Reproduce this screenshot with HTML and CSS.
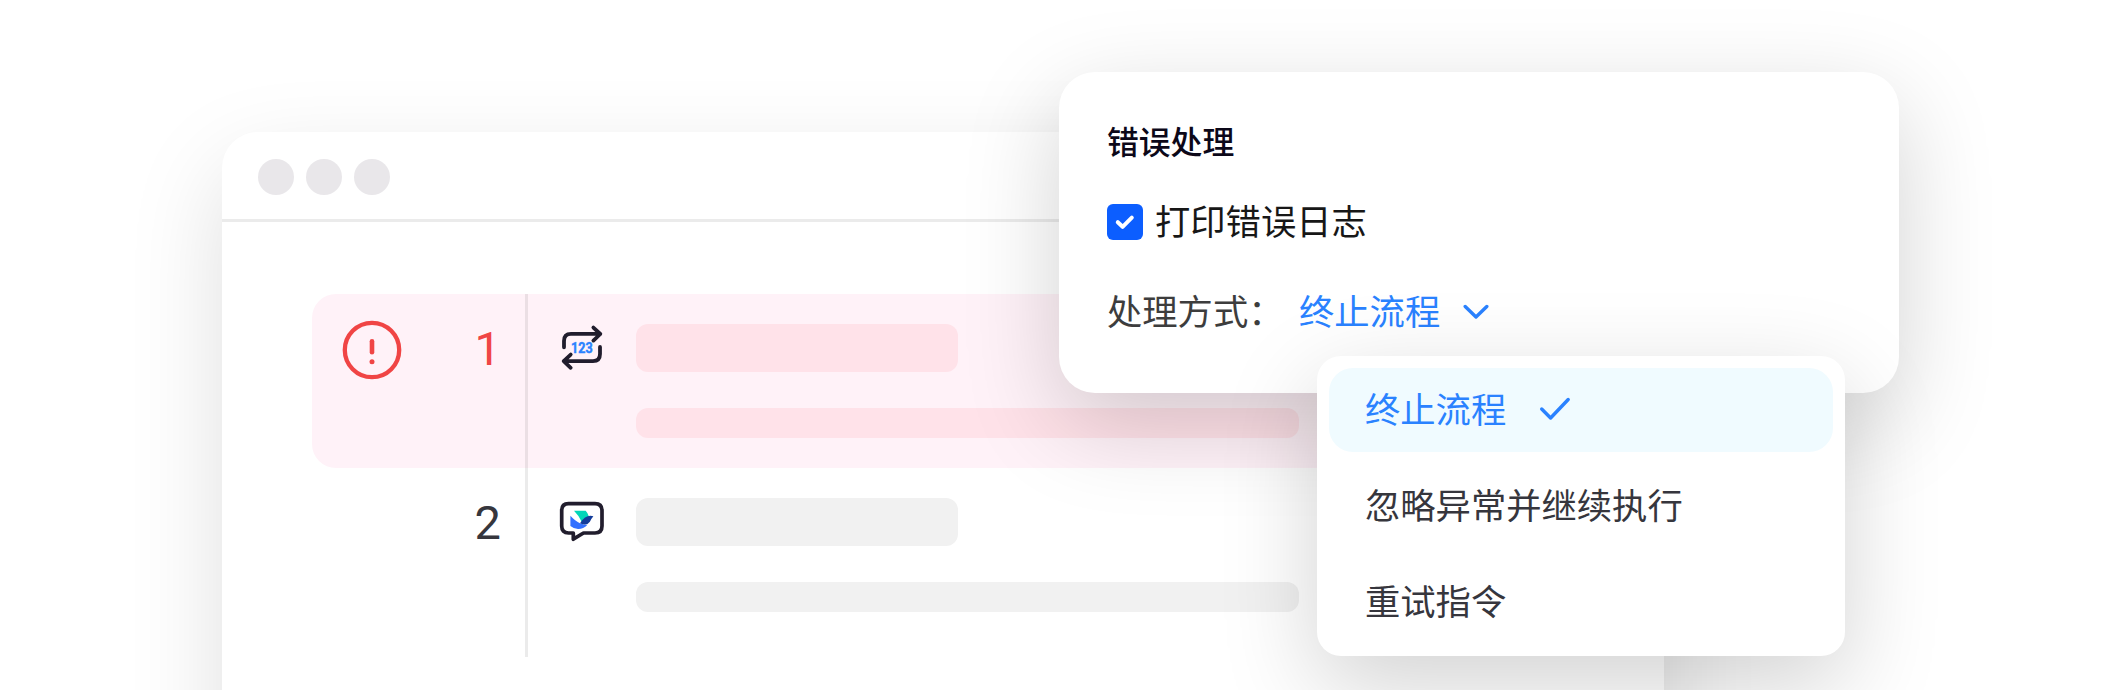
FILE: index.html
```html
<!DOCTYPE html>
<html lang="zh-CN">
<head>
<meta charset="utf-8">
<title>错误处理</title>
<link rel="stylesheet" href="styles.css">
</head>
<body>
<main class="stage">
  <section class="window">
    <header class="window-bar">
      <span class="dot"></span><span class="dot"></span><span class="dot"></span>
    </header>
    <div class="steps">
      <article class="step step-error">
        <div class="gutter">
          <svg class="alert" viewBox="0 0 60 60" fill="none" stroke="#f04545" stroke-width="4.3" stroke-linecap="round">
            <circle cx="30" cy="30" r="27.2"/>
            <path d="M30 21.2V32.3" stroke-width="4.6"/>
            <circle cx="30" cy="41.8" r="2.5" fill="#f04545" stroke="none"/>
          </svg>
          <span class="number">1</span>
        </div>
        <svg class="icon" viewBox="0 0 48 48" fill="none" stroke="#211d2d" stroke-width="3.8" stroke-linecap="round" stroke-linejoin="round">
          <path d="M6 23.3V17Q6 9.9 13 9.9H42.3M35.4 3.6L42.3 10L35.4 16.6"/>
          <path d="M42 23V30Q42 37.1 35 37.1H5.7M12.7 30.6L5.7 37.1L12.7 43.8"/>
          <text class="icon-digits" x="13" y="29.2" textLength="21.6" lengthAdjust="spacingAndGlyphs">123</text>
        </svg>
        <div class="lines"><span class="line line-short"></span><span class="line line-long"></span></div>
      </article>
      <article class="step">
        <div class="gutter"><span class="number">2</span></div>
        <svg class="icon" viewBox="0 0 48 48" fill="none">
          <path d="M10.5 5.6H37Q44 5.6 44 12.6V28Q44 35 37 35H25.5L15.3 41.2V35H10.5Q3.7 35 3.7 28V12.6Q3.7 5.6 10.5 5.6Z" stroke="#211d2d" stroke-width="3.7" stroke-linejoin="round"/>
          <path d="M16 12.7H27.7Q30 15 31 18.8Q27.5 20 23.8 24Q20.5 17 16 12.7Z" fill="#00d6b9"/>
          <path d="M12.4 17.8Q17.5 23.5 22 25.2Q26 27 29.5 26.8Q25 31.3 20 31.1Q15.8 30.8 12.4 28Z" fill="#3370ff"/>
          <path d="M22 25.2Q28 16 35.4 18.3Q33 21 31.9 23.8Q28.5 28.6 22 25.2Z" fill="#133c9a"/>
        </svg>
        <div class="lines"><span class="line line-short"></span><span class="line line-long"></span></div>
      </article>
    </div>
  </section>

  <section class="panel">
    <h1 class="panel-title">错误处理</h1>
    <label class="check-row">
      <span class="checkbox">
        <svg viewBox="0 0 36 36" fill="none" stroke="#fff" stroke-width="4" stroke-linecap="round" stroke-linejoin="round"><path d="M10.8 18.2L15.6 22.8L24.8 13.6"/></svg>
      </span>
      <span class="label">打印错误日志</span>
    </label>
    <div class="mode-row">
      <span class="label mode-label">处理方式：</span>
      <span class="label mode-value">终止流程</span>
      <svg class="chevron" viewBox="0 0 26 16" fill="none" stroke="#2a82ff" stroke-width="3.4" stroke-linecap="round" stroke-linejoin="round"><path d="M2.2 2.5L13 13L23.8 2.5"/></svg>
    </div>
  </section>

  <ul class="menu">
    <li class="option selected">
      <span class="label">终止流程</span>
      <svg class="tick" viewBox="0 0 32 24" fill="none" stroke="#2a82ff" stroke-width="3.4" stroke-linecap="round" stroke-linejoin="round"><path d="M2.7 12L11.6 21L29.2 2.5"/></svg>
    </li>
    <li class="option"><span class="label">忽略异常并继续执行</span></li>
    <li class="option"><span class="label">重试指令</span></li>
  </ul>
</main>
</body>
</html>
```

FILE: styles.css
```css
* { box-sizing: border-box; }

body {
  margin: 0;
  background: #fff;
  font-family: "Noto Sans CJK SC", sans-serif;
}

.stage {
  position: relative;
  width: 2124px;
  height: 690px;
  padding: 132px 0 0 222px;
  overflow: hidden;
}

.window {
  width: 1442px;
  height: 900px;
  border-radius: 36px;
  background: #fff;
  box-shadow: 0 36px 96px rgba(0, 0, 0, .13);
}

.window-bar {
  display: flex;
  gap: 12px;
  height: 90px;
  padding: 27px 36px;
  border-bottom: 3px solid #ebebeb;
}

.dot {
  width: 36px;
  height: 36px;
  border-radius: 50%;
  background: #e9e7ea;
}

.steps { padding: 72px 90px 0; }

.step {
  display: flex;
  height: 174px;
  border-radius: 24px;
}

.step + .step { height: 189px; }

.step-error { background: #fff2f8; }

.gutter {
  display: flex;
  justify-content: flex-end;
  width: 216px;
  padding: 26px 24px 0 30px;
  border-right: 3px solid rgba(0, 0, 0, .08);
}

.alert {
  width: 60px;
  height: 60px;
  margin-right: auto;
}

.number {
  height: 60px;
  color: #36363d;
  font: 400 47px/58px Roboto, sans-serif;
}

.step-error .number { color: #f04545; }

.icon {
  width: 48px;
  height: 48px;
  margin: 30px 30px 0;
}

.icon-digits {
  fill: #2a82ff;
  stroke: #2a82ff;
  stroke-width: .5px;
  font: 700 15.5px Roboto, sans-serif;
}

.lines {
  display: flex;
  flex-direction: column;
  gap: 36px;
  padding-top: 30px;
}

.line {
  border-radius: 12px;
  background: #f1f1f1;
}

.step-error .line { background: #ffe2e9; }

.line-short { width: 322px; height: 48px; }
.line-long { width: 663px; height: 30px; }

.panel {
  position: absolute;
  left: 1059px;
  top: 72px;
  width: 840px;
  height: 321px;
  padding: 44px 48px;
  border-radius: 36px;
  background: #fff;
  color: #171717;
  font-size: 35.3px;
  box-shadow: 0 30px 96px rgba(0, 0, 0, .18);
}

.panel-title {
  margin: 0 0 34px;
  color: #0c0819;
  font-size: 31.8px;
  font-weight: 500;
  line-height: 48px;
}

.label {
  padding-bottom: 6px;
  white-space: nowrap;
}

.check-row {
  display: flex;
  align-items: center;
  gap: 12px;
  height: 48px;
}

.checkbox {
  width: 36px;
  height: 36px;
  border-radius: 6px;
  background: #0c5eff;
}

.checkbox svg { display: block; }

.mode-row {
  display: flex;
  align-items: center;
  height: 48px;
  margin-top: 42px;
}

.mode-label {
  width: 192px;
  color: #3d3d3d;
}

.mode-value { color: #2a82ff; }

.chevron {
  width: 26px;
  height: 16px;
  margin-left: 23px;
}

.menu {
  position: absolute;
  left: 1317px;
  top: 356px;
  display: flex;
  flex-direction: column;
  gap: 12px;
  width: 528px;
  height: 300px;
  margin: 0;
  padding: 12px;
  border-radius: 24px;
  background: #fff;
  color: #36363d;
  font-size: 35.3px;
  list-style: none;
  box-shadow: 0 30px 96px rgba(0, 0, 0, .18);
}

.option {
  display: flex;
  align-items: center;
  height: 84px;
  padding: 0 36px;
  border-radius: 24px;
}

.selected {
  background: #f0fbff;
  color: #2a82ff;
}

.tick {
  width: 32px;
  height: 24px;
  margin: 0 0 2px 33px;
}
```
